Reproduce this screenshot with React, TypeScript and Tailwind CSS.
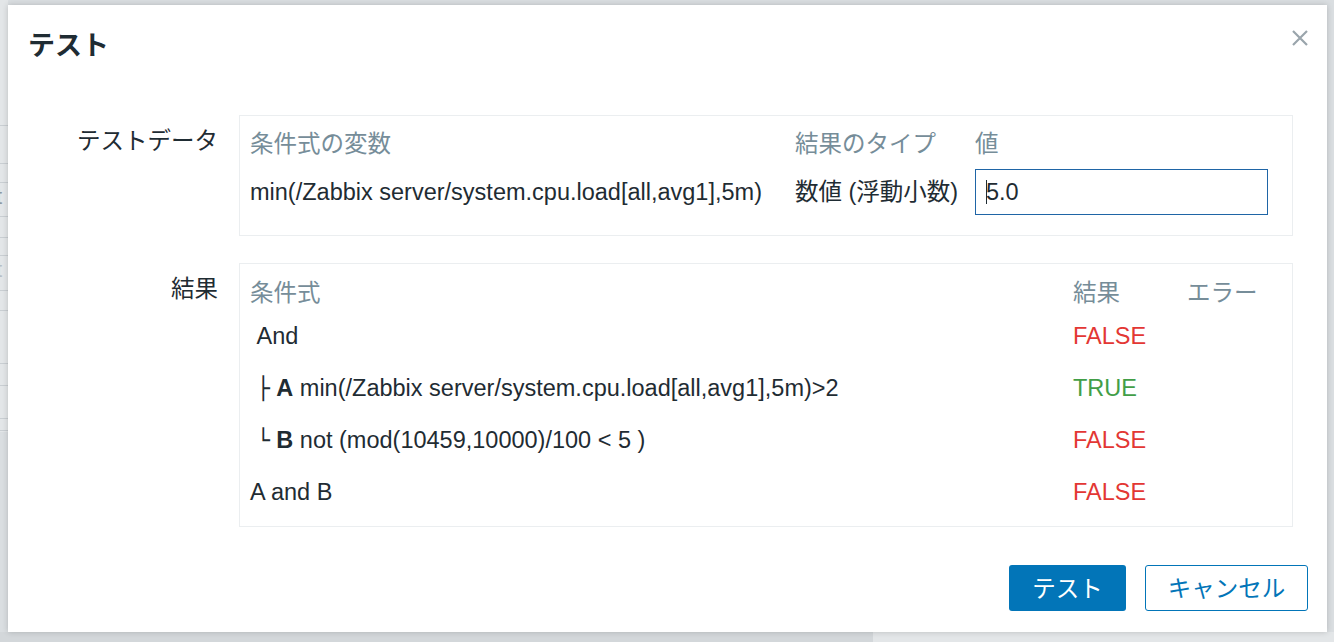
import React from "react";

const tree = "font-bold font-['DejaVu_Sans',sans-serif] text-[22px]";

const rows = [
  { expr: <>&nbsp;And</>, result: "FALSE" },
  {
    expr: (
      <>
        &nbsp;<span className={tree}>├</span> <b className="font-bold">A</b> min(/Zabbix server/system.cpu.load[all,avg1],5m)&gt;2
      </>
    ),
    result: "TRUE",
  },
  {
    expr: (
      <>
        &nbsp;<span className={tree}>└</span> <b className="font-bold">B</b> not (mod(10459,10000)/100 &lt; 5 )
      </>
    ),
    result: "FALSE",
  },
  { expr: <>A and B</>, result: "FALSE" },
];

const bgLines = [125, 163, 182, 216, 237, 255, 290, 310, 363, 385, 418, 430];

export default function App() {
  return (
    <div
      className="relative w-[1334px] h-[642px] overflow-hidden bg-[#dadee1] text-[#1f2c33]"
      style={{ fontFamily: '"Liberation Sans", Arial, "Noto Sans CJK JP", sans-serif' }}
    >
      {/* page behind the overlay */}
      <div className="absolute left-0 top-0 w-[8px] h-[432px] bg-[#e3e6e8]">
        {bgLines.map((y) => (
          <div key={y} className="absolute left-0 w-[8px] h-px bg-[#c9ced2]" style={{ top: y }} />
        ))}
        <span className="absolute left-[-4px] top-[186px] text-[22px] leading-none text-[#8e989e]">t</span>
        <span className="absolute left-[-4px] top-[259px] text-[22px] leading-none text-[#b7bec3]">t</span>
      </div>
      <div className="absolute left-0 top-[632px] w-[873px] h-[10px] bg-[#d3d7da]" />
      <div className="absolute left-[873px] top-[632px] w-[461px] h-[10px] bg-[#e3e6e8]" />

      {/* dialog */}
      <div className="absolute left-[8px] top-[5px] w-[1319px] h-[627px] bg-white shadow-[0_0_6px_rgba(0,0,0,0.18)] flex flex-col px-[20px]">
        <div className="flex items-start justify-between pt-[25px]">
          <h1 className="text-[27px] leading-[32px] font-bold text-[#1f2c33]">テスト</h1>
          <button className="mt-[-4px] mr-[-5px] w-[24px] h-[24px] flex items-center justify-center text-[#9aa5ac]">
            <svg width="20" height="20" viewBox="0 0 20 20" fill="none" stroke="currentColor" strokeWidth="2.2">
              <path d="M3 3 L17 17 M17 3 L3 17" />
            </svg>
          </button>
        </div>

        <div className="mt-[53px] grid grid-cols-[190px_1054px] gap-x-[21px] gap-y-[27px] text-[23.5px]">
          <div className="text-right pt-[12px] leading-[28px]">テストデータ</div>
          <div className="border border-[#ebeef0] pl-[10px] pt-[14px] pb-[20px]">
            <div className="grid grid-cols-[545px_180px_293px] items-center">
              <div className="leading-[28px] text-[#768d99]">条件式の変数</div>
              <div className="leading-[28px] text-[#768d99]">結果のタイプ</div>
              <div className="leading-[28px] text-[#768d99]">値</div>
              <div className="mt-[11px] leading-[28px] whitespace-nowrap">min(/Zabbix server/system.cpu.load[all,avg1],5m)</div>
              <div className="mt-[11px] leading-[28px] whitespace-nowrap">数値 (浮動小数)</div>
              <div className="mt-[11px] h-[46px] border border-[#1f65a6] flex items-center pl-[10px]">
                <span className="w-px h-[24px] bg-[#1f2c33] -mr-px" />
                <span className="leading-[28px]">5.0</span>
              </div>
            </div>
          </div>

          <div className="text-right pt-[12px] leading-[28px]">結果</div>
          <div className="border border-[#ebeef0] pl-[10px] pt-[15px] pb-[7px]">
            <div className="grid grid-cols-[823px_114px_95px]">
              <div className="leading-[28px] text-[#768d99] mb-[4px]">条件式</div>
              <div className="leading-[28px] text-[#768d99] mb-[4px]">結果</div>
              <div className="leading-[28px] text-[#768d99] mb-[4px]">エラー</div>
              {rows.map((r, i) => (
                <React.Fragment key={i}>
                  <div className="h-[52px] flex items-center whitespace-nowrap">
                    <span>{r.expr}</span>
                  </div>
                  <div
                    className={`h-[52px] flex items-center ${
                      r.result === "TRUE" ? "text-[#429e47]" : "text-[#e33734]"
                    }`}
                  >
                    {r.result}
                  </div>
                  <div className="h-[52px]" />
                </React.Fragment>
              ))}
            </div>
          </div>
        </div>

        <div className="mt-auto mb-[21px] flex justify-end gap-[19px] mr-[-1px] text-[23.5px]">
          <button className="w-[117px] h-[46px] pt-[4px] rounded-[3px] bg-[#0275b8] text-white">テスト</button>
          <button className="w-[163px] h-[46px] pt-[4px] rounded-[3px] border border-[#0275b8] bg-white text-[#0275b8]">
            キャンセル
          </button>
        </div>
      </div>
    </div>
  );
}
